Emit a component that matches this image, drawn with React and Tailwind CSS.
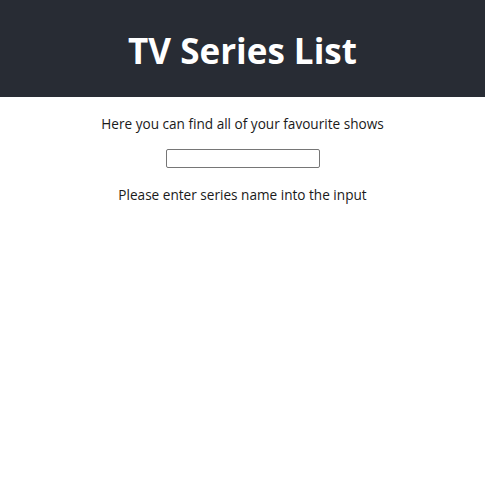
const App = () => {
  return (
    <div className="min-h-screen bg-white text-center font-['Open_Sans',sans-serif]">
      <header className="bg-[#282c34] h-[97px] flex items-center justify-center pt-[5px]">
        <h1 className="text-white text-[35px] font-bold">TV Series List</h1>
      </header>
      <p className="mt-[17px] text-[13.6px] text-[#1a1a1a]">Here you can find all of your favourite shows</p>
      <input type="text" className="mt-[15px] w-[154px] h-[19px] border border-[#767676] rounded-[2px]" />
      <p className="mt-[14px] text-[13.6px] text-[#1a1a1a]">Please enter series name into the input</p>
    </div>
  );
};

export default App;
